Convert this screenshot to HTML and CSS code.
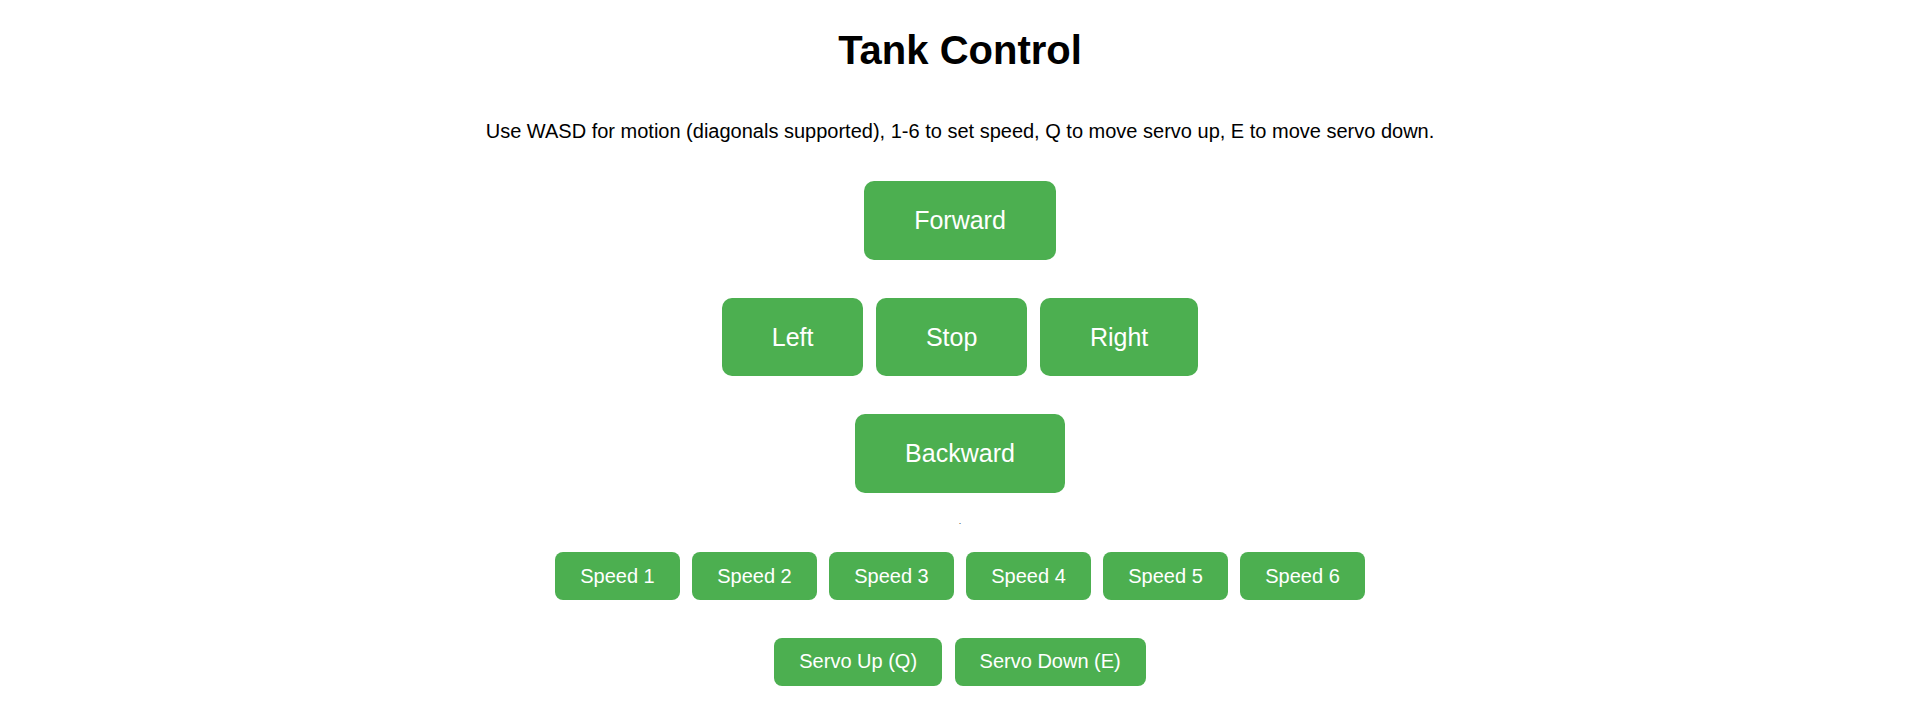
FILE: index.html
```html
<!DOCTYPE html>
<html lang="en">
<head>
<meta charset="utf-8">
<title>Tank Control</title>
<link rel="stylesheet" href="styles.css">
</head>
<body>
<h1 class="title">Tank Control</h1>
<p class="help">Use WASD for motion (diagonals supported), 1-6 to set speed, Q to move servo up, E to move servo down.</p>
<div class="row">
  <button class="btn big">Forward</button>
</div>
<div class="row">
  <button class="btn big">Left</button>
  <button class="btn big">Stop</button>
  <button class="btn big">Right</button>
</div>
<div class="row">
  <button class="btn big">Backward</button>
</div>
<div class="status">.</div>
<div class="row">
  <button class="btn small">Speed 1</button>
  <button class="btn small">Speed 2</button>
  <button class="btn small">Speed 3</button>
  <button class="btn small">Speed 4</button>
  <button class="btn small">Speed 5</button>
  <button class="btn small">Speed 6</button>
</div>
<div class="row">
  <button class="btn small">Servo Up (Q)</button>
  <button class="btn small">Servo Down (E)</button>
</div>
</body>
</html>
```
FILE: styles.css
```css
html, body {
  background: #ffffff;
}
body {
  margin: 0;
  display: flex;
  flex-direction: column;
  align-items: center;
  font-family: "Liberation Sans", Arial, sans-serif;
  color: #000;
}
.title {
  font-size: 40px;
  font-weight: bold;
  margin: 26.8px 0;
  line-height: 46px;
}
.help {
  font-size: 20px;
  line-height: 23px;
  margin: 20px 0;
}
.row {
  display: flex;
  justify-content: center;
  margin: 12.5px 0;
}
.btn {
  font-family: "Liberation Sans", Arial, sans-serif;
  background: #4CAF50;
  color: #ffffff;
  border: none;
  margin: 6.25px;
  cursor: pointer;
}
.big {
  font-size: 25px;
  line-height: 28.75px;
  padding: 25px 50px;
  border-radius: 10px;
}
.small {
  font-size: 20px;
  line-height: 23px;
  padding: 12.5px 25px;
  border-radius: 8px;
}
.status {
  height: 22.4px;
  font-size: 9px;
  line-height: 20px;
  color: #444;
}
```
